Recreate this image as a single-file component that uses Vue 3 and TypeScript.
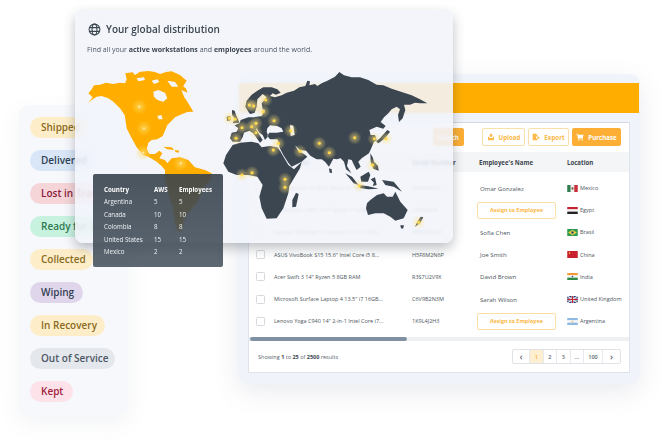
<script setup lang="ts">
interface Row {
  title: string
  serial: string
  name: string
  country: string
  flag: string
}

const chips = [
  { label: 'Shipped', tone: 'amber', width: 58 },
  { label: 'Delivered', tone: 'blue', width: 65 },
  { label: 'Lost in Transit', tone: 'red', width: 92 },
  { label: 'Ready for Use', tone: 'green', width: 84 },
  { label: 'Collected', tone: 'amber', width: 63 },
  { label: 'Wiping', tone: 'purple', width: 53 },
  { label: 'In Recovery', tone: 'amber', width: 75 },
  { label: 'Out of Service', tone: 'grey', width: 85 },
  { label: 'Kept', tone: 'pink', width: 43 },
]

const rows: Row[] = [
  { title: 'Dell Inspiron 15 5000 Series i5 16GB...', serial: 'ST983R7R2', name: 'Omar Gonzalez', country: 'Mexico', flag: 'mx' },
  { title: 'HP Pavilion x360 13.3" Ryzen 7 12GB...', serial: 'L2X9J4K6F', name: '', country: 'Egypt', flag: 'eg' },
  { title: 'Lenovo ThinkPad X1 Carbon 14" i7 16GB...', serial: '9E6GTD1S3', name: 'Sofia Chen', country: 'Brasil', flag: 'br' },
  { title: 'ASUS VivoBook S15 15.6" Intel Core i5 8...', serial: 'H5F8M2N6P', name: 'Joe Smith', country: 'China', flag: 'cn' },
  { title: 'Acer Swift 3 14" Ryzen 5 8GB RAM', serial: 'R3S7U2V9X', name: 'David Brown', country: 'India', flag: 'in' },
  { title: 'Microsoft Surface Laptop 4 13.5" i7 16GB...', serial: 'C6V9B2N3M', name: 'Sarah Wilson', country: 'United Kingdom', flag: 'gb' },
  { title: 'Lenovo Yoga C940 14" 2-in-1 Intel Core i7...', serial: '1K9L4J2H3', name: '', country: 'Argentina', flag: 'ar' },
]

const stats = [
  ['Argentina', '5', '5'],
  ['Canada', '10', '10'],
  ['Colombia', '8', '8'],
  ['United States', '15', '15'],
  ['Mexico', '2', '2'],
]

const pages = ['‹', '1', '2', '3', '...', '100', '›']

// coordinates below are in 3x canvas units, same scale as the svg viewBox
const americasDots = [
  [178, 140],
  [192, 205],
  [190, 278],
  [302, 310],
]
const oldWorldDots = [
  [137, 120], [88, 135], [101, 138], [130, 155], [28, 175], [45, 178], [162, 182], [108, 190],
  [66, 203], [95, 200], [108, 218], [212, 212], [48, 235], [175, 250], [160, 270], [240, 274],
  [298, 250], [328, 278], [404, 233], [463, 236], [498, 236], [458, 315], [418, 377], [66, 345],
  [96, 338], [195, 358], [195, 382], [596, 487],
]
</script>

<template>
  <div class="canvas">
    <aside class="status-panel">
      <span
        v-for="chip in chips"
        :key="chip.label"
        class="chip"
        :class="chip.tone"
        :style="{ width: chip.width + 'px' }"
      >{{ chip.label }}</span>
    </aside>

    <section class="inventory">
      <div class="band"></div>
      <div class="table-card">
        <div class="toolbar">
          <div class="search-input"></div>
          <button class="btn solid search">Search</button>
          <button class="btn upload">
            <svg viewBox="0 0 12 12" width="8" height="8"><path d="M6 .5 9 3.6H7.2V6H4.8V3.6H3zM1.5 5.5h2v2h5v-2h2V11h-9z" fill="#fdb94a" /></svg>
            Upload
          </button>
          <button class="btn export">
            <svg viewBox="0 0 12 12" width="8" height="8"><path d="M1 1h5l2 2v2.4h-2v3h2V11H1zM8.2 4.2 11.6 7 8.2 9.8z" fill="#fdb94a" /></svg>
            Export
          </button>
          <button class="btn solid purchase">
            <svg viewBox="0 0 12 12" width="8" height="8"><path d="M.5 1.2h2l.5 1.4h8.5L10 7.4H4l.3 1h6v1.1H3.3L1.7 2.3H.5z" fill="#fff" /><circle cx="4.4" cy="10.6" r="1" fill="#fff" /><circle cx="9.2" cy="10.6" r="1" fill="#fff" /></svg>
            Purchase
          </button>
        </div>

        <div class="grid-row head">
          <span></span>
          <span>Device Title</span>
          <span>Serial Number</span>
          <span>Employee's Name</span>
          <span>Location</span>
        </div>
        <div class="rows">
          <div v-for="row in rows" :key="row.serial" class="grid-row body">
            <i class="check"></i>
            <span class="title">{{ row.title }}</span>
            <span>{{ row.serial }}</span>
            <span v-if="row.name" class="person">{{ row.name }}</span>
            <span v-else><button class="assign">Assign to Employee</button></span>
            <span class="place">
              <svg class="flag" viewBox="0 0 12 8" width="11" height="7">
                <template v-if="row.flag === 'mx'">
                  <rect width="4" height="8" fill="#2f7d4f" /><rect x="4" width="4" height="8" fill="#eee" /><rect x="8" width="4" height="8" fill="#c8303c" /><circle cx="6" cy="4" r="1.3" fill="#7a5b3a" />
                </template>
                <template v-else-if="row.flag === 'eg'">
                  <rect width="12" height="2.7" fill="#c8202f" /><rect y="2.7" width="12" height="2.6" fill="#f4f4f4" /><rect y="5.3" width="12" height="2.7" fill="#222" />
                </template>
                <template v-else-if="row.flag === 'br'">
                  <rect width="12" height="8" fill="#2f9a50" /><path d="M6 1 11 4 6 7 1 4z" fill="#f5d23c" /><circle cx="6" cy="4" r="1.4" fill="#2b4a8c" />
                </template>
                <template v-else-if="row.flag === 'cn'">
                  <rect width="12" height="8" fill="#c8202f" /><circle cx="2.6" cy="2.4" r=".9" fill="#f5d23c" />
                </template>
                <template v-else-if="row.flag === 'in'">
                  <rect width="12" height="2.7" fill="#f39a37" /><rect y="2.7" width="12" height="2.6" fill="#f6f6f6" /><rect y="5.3" width="12" height="2.7" fill="#2f8a45" /><circle cx="6" cy="4" r=".9" fill="#2b3f8c" />
                </template>
                <template v-else-if="row.flag === 'gb'">
                  <rect width="12" height="8" fill="#2b3a78" /><path d="M0 0 12 8M12 0 0 8" stroke="#eee" stroke-width="1.4" /><path d="M6 0v8M0 4h12" stroke="#eee" stroke-width="2.4" /><path d="M6 0v8M0 4h12" stroke="#c8202f" stroke-width="1.2" />
                </template>
                <template v-else>
                  <rect width="12" height="2.7" fill="#8fb8e2" /><rect y="2.7" width="12" height="2.6" fill="#f6f6f6" /><rect y="5.3" width="12" height="2.7" fill="#8fb8e2" /><circle cx="6" cy="4" r=".9" fill="#e8bd4a" />
                </template>
              </svg>
              {{ row.country }}
            </span>
          </div>
        </div>
        <div class="scroll-track"><div class="scroll-thumb"></div></div>
        <div class="table-foot">
          <span>Showing <b>1</b> to <b>25</b> of <b>2500</b> results</span>
          <div class="pager">
            <span v-for="page in pages" :key="page" class="page" :class="{ current: page === '1', wide: page === '100', arrow: page === '‹' || page === '›' }">{{ page }}</span>
          </div>
        </div>
      </div>
    </section>

    <section class="map-card">
      <header class="map-head">
        <svg viewBox="0 0 24 24" width="13" height="13" fill="none" stroke="#3c4650" stroke-width="2">
          <circle cx="12" cy="12" r="10" />
          <ellipse cx="12" cy="12" rx="4.5" ry="10" />
          <path d="M2.8 8.5h18.4M2.8 15.5h18.4" />
        </svg>
        <h2>Your global distribution</h2>
      </header>
      <p class="map-sub">Find all your <b>active workstations</b> and <b>employees</b> around the world.</p>

      <svg class="world" viewBox="240 180 1050 525" width="350" height="175">
        <defs>
          <radialGradient id="glowDark">
            <stop offset="0" stop-color="#ffe27a" stop-opacity=".6" />
            <stop offset="1" stop-color="#ffe27a" stop-opacity="0" />
          </radialGradient>
          <radialGradient id="glowOrange">
            <stop offset="0" stop-color="#ffe27a" stop-opacity=".7" />
            <stop offset="1" stop-color="#ffd24a" stop-opacity="0" />
          </radialGradient>
        </defs>

        <g transform="translate(240 180)">
          <path
            fill="#ffae00"
            fill-rule="evenodd"
            d="M25 100 35 88 42 76 60 74 78 68 100 72 120 68 135 70 140 58 136 40 158 37 165 45 180 35 205 33 225 36 240 42 258 36 275 34 300 45 320 62 312 75 305 92 313 112 325 130 340 155 322 156 300 165 285 172 272 185 262 195 255 212 248 228 232 238 215 240 205 248 200 268 208 282 225 282 238 272 247 280 238 295 255 300 262 310 275 295 300 292 325 300 345 322 375 330 395 340 392 360 370 385 355 420 340 440 315 470 305 510 295 515 285 490 280 450 265 400 255 360 255 330 245 318 230 305 205 290 190 285 170 262 158 240 150 225 140 205 134 165 120 145 100 125 85 115 65 108 50 110 35 120 25 128 38 112ZM220 95 235 90 255 98 262 115 250 125 232 120 222 110ZM215 62 232 58 238 66 222 72ZM262 62 285 66 295 80 275 80ZM170 55 192 52 195 60 175 64ZM232 168 244 165 248 178 236 178Z"
          />
          <path fill="#ffae00" d="M250 260 275 262 283 270 262 268ZM285 270 298 272 296 278 286 276ZM300 75 318 85 322 98 304 90Z" />
          <g v-for="[x, y] in americasDots" :key="x">
            <circle :cx="x" :cy="y" r="24" fill="url(#glowOrange)" />
            <circle :cx="x" :cy="y" r="2.6" fill="#fff6c8" />
          </g>
        </g>

        <g transform="translate(660 180)" fill="#3c4650">
          <!-- Eurasia, Caspian and Black Sea cut out -->
          <path
            fill-rule="evenodd"
            d="M88 160 76 140 80 122 95 104 112 92 130 82 155 82 172 88 182 98 168 104 158 100 150 108 165 112 185 106 200 98 222 92 238 82 256 78 262 62 270 64 268 76 285 72 292 78 305 70 322 62 345 50 358 36 372 46 395 52 420 52 445 60 470 74 490 76 515 86 545 96 575 106 600 118 622 130 600 130 585 128 570 134 552 134 556 150 548 175 537 186 534 165 540 148 530 140 515 148 505 160 492 172 482 186 497 198 490 206 470 200 448 210 452 225 465 225 470 240 462 245 455 262 447 280 425 295 415 305 422 320 410 330 402 315 395 300 385 298 381 318 394 340 378 328 372 305 362 295 350 298 340 296 327 320 315 305 305 298 290 298 272 288 258 272 240 270 225 256 235 272 252 282 262 290 245 305 215 320 205 308 190 285 178 262 178 250 172 238 150 238 142 228 148 218 170 218 190 215 185 205 172 198 150 196 142 205 140 215 145 228 135 240 128 225 118 218 110 205 108 208 128 240 120 248 100 220 88 212 72 218 68 232 60 245 38 245 30 235 35 218 50 215 55 205 44 196 58 190 62 180 85 172 100 172 125 168 135 150 128 148 125 130 140 112 128 102 112 118 110 140 104 158 92 162ZM210 195 220 197 224 225 212 228Z"
          />
          <!-- Africa -->
          <path d="M38 255 60 248 95 245 115 250 125 262 150 258 172 262 180 272 205 315 222 328 245 306 240 325 222 355 208 378 205 400 190 445 170 475 140 476 125 445 118 410 128 375 112 350 85 345 50 345 25 335 10 310 18 285Z" />
          <!-- islands: UK and Ireland, Madagascar, Japan -->
          <path d="M36 150 44 152 48 165 54 178 58 188 38 190 44 176 36 164ZM20 170 31 168 32 181 21 183Z" />
          <path d="M228 398 236 402 228 440 217 442 217 420Z" />
          <path d="M475 250 495 235 510 215 502 210 480 235 468 244Z" />
          <path d="M327 325 335 328 336 339 329 338Z" />
          <!-- south east asia -->
          <path d="M451 280 458 292 462 305 474 318 476 332 460 326 452 305ZM376 340 396 350 416 375 401 370ZM418 375 445 379 476 386 445 388 420 384ZM421 350 446 335 451 345 444 365 424 365ZM452 358 465 352 470 375 458 378 462 368ZM486 360 521 365 546 395 521 380 496 375Z" />
          <!-- australia, tasmania, new zealand -->
          <path d="M441 430 451 420 471 405 491 400 501 410 518 410 526 395 541 425 563 450 551 475 526 482 511 470 491 460 466 460 444 465 438 445Z" />
          <path d="M541 496 552 496 549 506 543 505ZM610 472 600 490 585 500 592 485 602 470Z" />
          <g v-for="[x, y] in oldWorldDots" :key="`${x}-${y}`">
            <circle :cx="x" :cy="y" r="21" fill="url(#glowDark)" />
            <circle :cx="x" :cy="y" r="4.5" fill="#ffd84a" />
          </g>
        </g>
      </svg>
    </section>

    <div class="stats">
      <table>
        <thead>
          <tr><th>Country</th><th>AWS</th><th>Employees</th></tr>
        </thead>
        <tbody>
          <tr v-for="stat in stats" :key="stat[0]">
            <td v-for="cell in stat" :key="cell + stat[0]">{{ cell }}</td>
          </tr>
        </tbody>
      </table>
    </div>
  </div>
</template>

<style>
html,
body {
  margin: 0;
  background: #fff;
}
</style>

<style scoped>
.canvas {
  position: relative;
  width: 660px;
  height: 445px;
  overflow: hidden;
  background: #fff;
  font-family: "Open Sans", "Liberation Sans", sans-serif;
  color: #3c4650;
  filter: blur(0.3px);
}

/* each card is a window on a free canvas */
.status-panel {
  position: absolute;
  left: 19px;
  top: 105px;
  width: 109px;
  height: 310px;
  box-sizing: border-box;
  padding: 12px 11px;
  display: flex;
  flex-direction: column;
  gap: 12px;
  background: #f7f8fc;
  border-radius: 10px;
  box-shadow: 0 8px 22px rgba(90, 100, 130, 0.08);
}
.chip {
  flex: none;
  height: 21px;
  line-height: 21px;
  padding-left: 11px;
  box-sizing: border-box;
  border-radius: 11px;
  font-size: 10px;
  font-weight: 600;
  white-space: nowrap;
}
.amber { background: #fdeec9; color: #8a6a1e; }
.blue { background: #d9e6f8; color: #2e3f55; }
.red { background: #f6d5d8; color: #8a1c3c; }
.green { background: #c8f2e0; color: #2e7a50; }
.purple { background: #e0d6ec; color: #343f52; }
.grey { background: #e4e7ec; color: #4d5866; }
.pink { background: #fde2ea; color: #a01f3e; }

.inventory {
  position: absolute;
  left: 238px;
  top: 74px;
  width: 402px;
  height: 310px;
  box-sizing: border-box;
  padding-top: 9px;
  background: #f0f3f9;
  border-radius: 10px;
  box-shadow: 0 8px 26px rgba(90, 100, 130, 0.13);
}
.band {
  height: 30px;
  margin-left: 1px;
  margin-right: 1px;
  background: #ffae00;
}
.table-card {
  margin: 9px 10px 0 10px;
  height: 251px;
  background: #fff;
  border: 1px solid #dfe4ec;
  border-top-color: #d5dbe5;
  box-sizing: border-box;
  display: flex;
  flex-direction: column;
}
.toolbar {
  height: 29px;
  flex: none;
  padding: 5px 8px 0 0;
  box-sizing: border-box;
  display: flex;
  justify-content: flex-end;
  align-items: flex-start;
  gap: 3px;
}
.search-input {
  width: 50px;
  height: 18px;
  border: 1px solid #e6e9ee;
  box-sizing: border-box;
  border-radius: 2px;
}
.btn {
  height: 18px;
  padding: 0;
  display: flex;
  align-items: center;
  justify-content: center;
  gap: 4px;
  font: 700 6.2px "Open Sans", sans-serif;
  color: #fdb94a;
  background: #fff;
  border: 1px solid #f9dfa9;
  border-radius: 2px;
  box-sizing: border-box;
}
.btn.solid {
  color: #fff;
  background: #fdaf35;
  border-color: #fdaf35;
}
.search { width: 31px; margin-right: 15px; }
.upload { width: 43px; }
.export { width: 41px; }
.purchase { width: 49px; }

.grid-row {
  display: grid;
  grid-template-columns: 25px 138px 67px 88px 1fr;
  align-items: center;
}
.head {
  height: 20px;
  flex: none;
  background: #f4f5f6;
  font-size: 6.1px;
  font-weight: 700;
  color: #3c4650;
}
.rows {
  padding-top: 5px;
  flex: none;
}
.body {
  height: 22.2px;
  font-size: 5.5px;
  color: #4c5661;
}
.check {
  justify-self: end;
  width: 7px;
  height: 7px;
  margin-right: 9px;
  border: 1px solid #d5d9de;
  border-radius: 1.5px;
}
.title {
  white-space: nowrap;
}
.person {
  padding-left: 1px;
  font-size: 6.1px;
}
.place {
  display: flex;
  align-items: center;
  gap: 2px;
  white-space: nowrap;
}
.flag {
  flex: none;
}
.assign {
  display: block;
  width: 79px;
  height: 17px;
  margin-left: -2px;
  padding: 0;
  background: #fff;
  border: 1px solid #fbdfa6;
  border-radius: 2px;
  font: 700 5.5px "Open Sans", sans-serif;
  color: #fcb746;
}
.scroll-track {
  margin-top: 5px;
  height: 4px;
  flex: none;
  background: #eef0f2;
}
.scroll-thumb {
  width: 157px;
  height: 100%;
  margin-left: 1px;
  border-radius: 2px;
  background: #8090a2;
}
.table-foot {
  flex: 1;
  display: flex;
  align-items: center;
  justify-content: space-between;
  padding: 0 8px 0 9px;
  font-size: 5.5px;
  color: #5a6470;
}
.table-foot b {
  color: #3c4650;
}
.pager {
  display: flex;
  height: 15px;
  border: 1px solid #dfe3e8;
  border-radius: 2px;
  box-sizing: border-box;
}
.page {
  width: 13.5px;
  box-sizing: border-box;
  display: flex;
  align-items: center;
  justify-content: center;
  font-weight: 600;
  border-right: 1px solid #e6e9ed;
}
.page:last-child {
  border-right: 0;
}
.page.arrow {
  width: 17px;
  font-size: 9px;
}
.page.wide {
  width: 19px;
}
.page.current {
  background: #fdefcf;
  color: #f4ae33;
}

.map-card {
  position: absolute;
  left: 75px;
  top: 10px;
  width: 378px;
  height: 233px;
  box-sizing: border-box;
  padding: 12px 12px 0;
  background: rgba(241, 244, 250, 0.89);
  backdrop-filter: blur(1px);
  border-radius: 8px;
  box-shadow: 0 5px 12px rgba(50, 60, 70, 0.32);
}
.map-head {
  display: flex;
  align-items: center;
  gap: 5px;
  padding-left: 1px;
}
.map-head h2 {
  margin: 0;
  font-size: 10px;
  font-weight: 600;
  color: #3c4650;
}
.map-sub {
  margin: 9px 0 0;
  font-size: 7px;
  line-height: 10px;
  color: #4c5661;
}
.map-sub b {
  font-weight: 700;
  color: #3c4650;
}
.world {
  display: block;
  margin: 5px 0 0 -7px;
}

.stats {
  position: absolute;
  left: 93px;
  top: 174px;
  width: 130px;
  height: 93px;
  box-sizing: border-box;
  padding: 9px 0 0 11px;
  background: linear-gradient(rgba(56, 67, 78, 0.9), rgba(66, 78, 90, 0.86));
  backdrop-filter: blur(1px);
  border-radius: 2px;
  color: #eef1f4;
}
.stats table {
  border-collapse: collapse;
  font-size: 6.2px;
}
.stats th {
  text-align: left;
  font-weight: 700;
  color: #fff;
}
.stats th,
.stats td {
  height: 12.5px;
  padding: 0;
  white-space: nowrap;
}
.stats tr > :nth-child(1) { width: 50px; }
.stats tr > :nth-child(2) { width: 25px; }
</style>
